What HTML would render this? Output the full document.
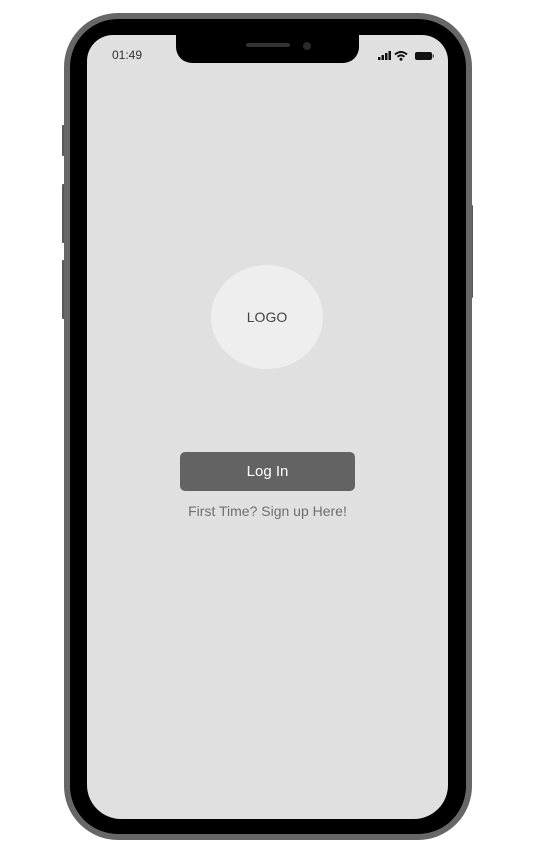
<!DOCTYPE html>
<html><head><style>
*{margin:0;padding:0;box-sizing:border-box}
body{width:559px;height:867px;background:#fff;position:relative;overflow:hidden;font-family:"Liberation Sans",sans-serif}
.frame{position:absolute;left:64px;top:13px;width:408px;height:827px;border-radius:54px;background:#000;border:6px solid #676767}
.screen{position:absolute;left:87px;top:35px;width:361px;height:784px;background:#e0e0e0;border-radius:26px 26px 34px 34px;overflow:hidden}
.notch{position:absolute;left:176px;top:34px;width:183px;height:29px;background:#000;border-radius:0 0 16px 16px}
.btn{position:absolute;background:#5a5a5a;border-radius:1px}
</style></head><body>
<div class="btn" style="left:62px;top:125px;width:3px;height:31px"></div>
<div class="btn" style="left:62px;top:184px;width:3px;height:59px"></div>
<div class="btn" style="left:62px;top:260px;width:3px;height:59px"></div>
<div class="btn" style="left:470px;top:205px;width:3px;height:93px"></div>
<div class="frame"></div>
<div class="screen">
<div style="position:absolute;left:25px;top:13px;font-size:12px;color:#333">01:49</div>
<svg style="position:absolute;left:290px;top:15px" width="60" height="12" viewBox="0 0 60 12">
<rect x="1" y="7" width="2.5" height="3" fill="#111"/><rect x="4.5" y="5" width="2.5" height="5" fill="#111"/><rect x="8" y="3" width="2.5" height="7" fill="#111"/><rect x="11.5" y="1" width="2.5" height="9" fill="#111"/>
<path d="M18 4.5 Q24 -0.5 30 4.5" stroke="#111" stroke-width="2" fill="none"/><path d="M20.5 6.8 Q24 3.8 27.5 6.8" stroke="#111" stroke-width="2" fill="none"/><circle cx="24" cy="9.3" r="1.5" fill="#111"/>
<rect x="38.5" y="2.5" width="16" height="7" rx="1.5" fill="#111" stroke="#111"/><rect x="55.5" y="4.5" width="1.5" height="3" fill="#555"/>
</svg>
<div style="position:absolute;left:124px;top:230px;width:112px;height:104px;border-radius:50%;background:#eeeeee;text-align:center;line-height:104px;font-size:14px;color:#444">LOGO</div>
<div style="position:absolute;left:93px;top:417px;width:175px;height:39px;border-radius:5px;background:#636363;color:#fff;text-align:center;line-height:40px;font-size:15px">Log In</div>
<div style="position:absolute;left:0;width:361px;top:468px;text-align:center;font-size:14px;color:#6e6e6e">First Time? Sign up Here!</div>
</div>
<div class="notch"></div>
<div style="position:absolute;left:246px;top:43px;width:44px;height:4px;border-radius:2px;background:#333"></div>
<div style="position:absolute;left:303px;top:42px;width:8px;height:8px;border-radius:50%;background:#2a2a2a"></div>
</body></html>
